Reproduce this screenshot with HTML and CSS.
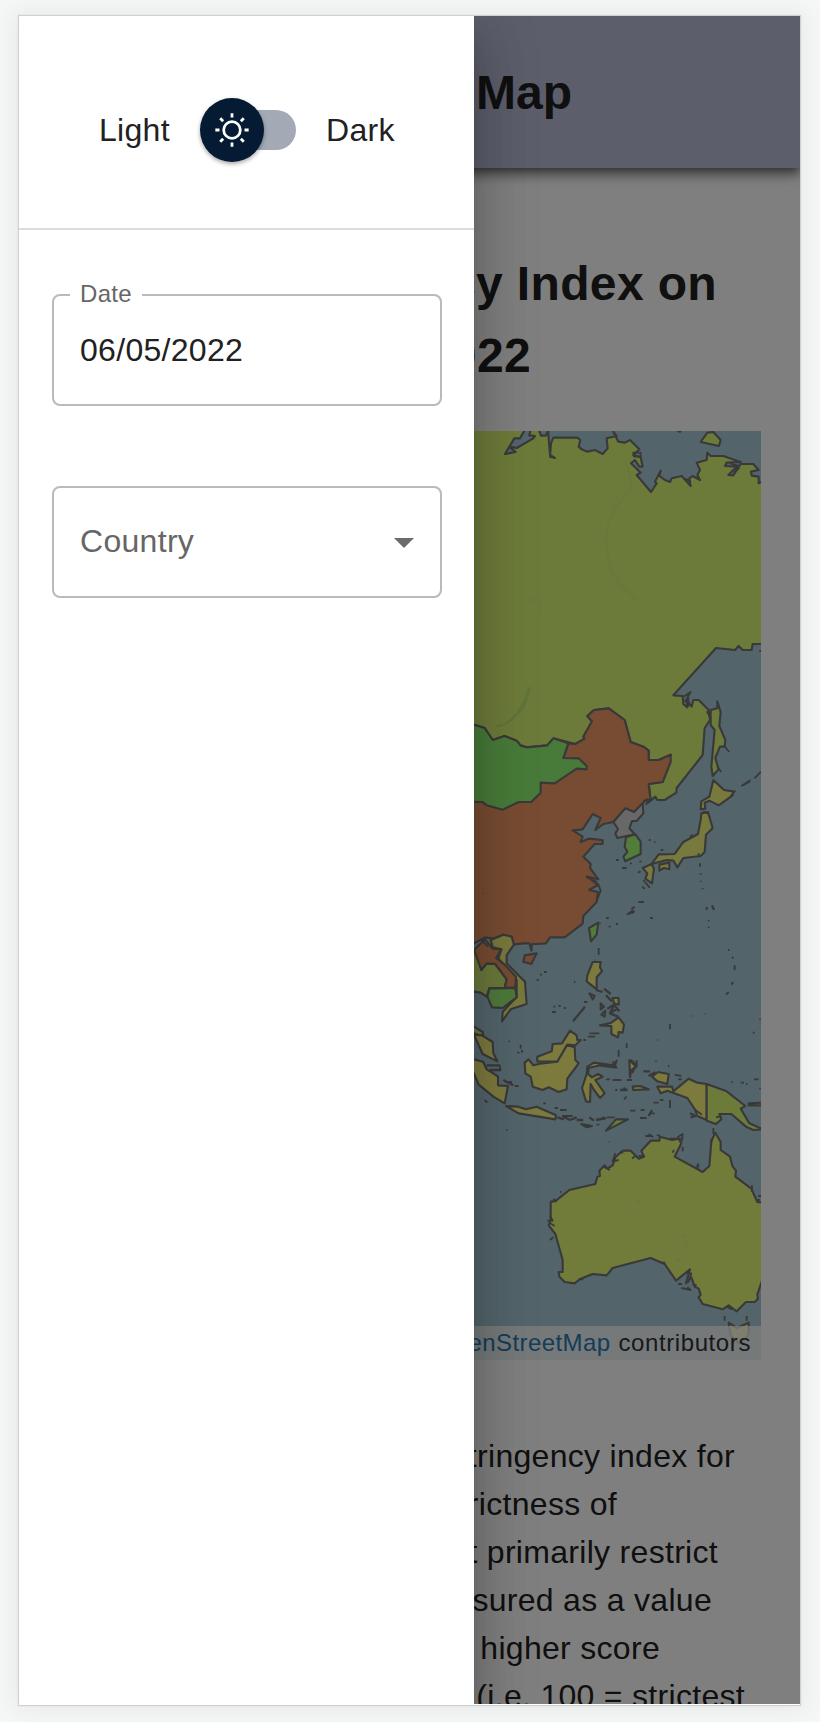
FILE: index.html
```html
<!DOCTYPE html>
<html lang="en">
<head>
<meta charset="utf-8">
<title>Stringency Map</title>
<link rel="stylesheet" href="styles.css">
</head>
<body>
<div class="device">
  <div class="page">
    <header class="appbar"><h1 class="appbar-title">Map</h1></header>
    <h2 class="heading"><span class="h-one">Stringency Index on</span><span class="h-two">2022</span></h2>
    <div class="map">
      <svg class="map-svg" viewBox="464 431 297 929" width="297" height="929">
        <g transform="translate(470 420) scale(.33333)" class="land">
          <path class="russia" d="M-30 20H170L150 55 133 55 105 102 137 96 118 80 140 84 190 55 195 48 178 46 182 30H207L213 47 228 47 234 30 240 105 255 114 240 110 243 70 250 53 322 53 331 60 326 80 335 88 352 95 375 90 398 102 413 85 410 55 440 48 430 35 445 65 465 68 480 60 508 88 490 105 512 112 518 140 508 140 495 120 483 130 512 158 500 165 543 216 560 190 555 185 572 152 568 168 585 180 600 186 605 175 635 168 662 198 658 175 668 168 690 180 682 165 690 150 680 128 710 120 712 98 722 108 760 108 812 126 770 128 765 138 800 140 775 165 790 166 812 132 850 132 866 150 843 155 845 167 866 170 866 190 885 180V672H848L845 690 818 690 806 678 795 690 738 684 610 826 638 828 640 852 652 862 650 840 665 860 670 840 686 840 716 870 720 900 704 924 698 1005 620 1104 619 1118 584 1140 562 1140 556 1130 542 1142 536 1092 578 1086 602 1004 566 1020 536 1020 536 992 520 980 482 966 464 900 416 865 372 870 352 888 366 904 340 950 344 956 316 972 250 955 232 976 170 982 150 975 140 962 104 948 68 960 44 924-30 900Z"/>
          <path class="russia" d="M692 66 712 38 730 36 752 60 747 78Z"/>
          <path class="dots" d="M490 98h22v12h-20zM780 130l26 8-14 20 16-14M645 176l16 8M622 33l8 3 4-5M868 693h8"/>
          <path class="river" d="M460 120Q490 170 480 215L450 245Q400 310 410 380 415 450 450 492L500 540M175 535 210 550 205 575"/>
        </g>
        <g transform="translate(470 640) scale(.33333)" class="land">
          <path class="lake" d="M172 140L182 142Q174 204 138 230 112 258 78 262L80 254 100 252Q165 205 172 140Z"/>
          <path class="china" d="M-30 430 0 300 280 354 295 310 316 312 344 296 340 290 366 244 352 228 372 210 416 205 464 240 482 306 520 320 536 332 536 360 566 360 602 344 602 366 578 426 536 432 542 482 530 478 518 490 492 516 466 505 430 546 400 552 376 570 392 534 368 522 338 568 308 571 338 590 332 606 356 596 398 600 398 612 374 612 340 650 362 672 360 684 385 718 350 710 384 734 358 750 384 756 380 786 340 828 338 851 284 892 240 892 228 910 200 912 186 912 184 932 178 910 160 910 130 914 125 890 100 884 70 896 45 892 12 910-30 910Z"/>
          <path class="mongolia" d="M-30 242 12 254 44 264 68 300 104 288 140 302 152 317 170 322 232 316 250 295 295 310 280 354 326 355 350 378 350 388 320 386 254 430 212 428 212 458 184 486 146 486 98 509 50 496 38 486-30 484Z"/>
          <path class="nkorea" d="M430 546 466 505 492 516 518 490 520 520 500 543 486 543 478 565 494 583 442 594 436 580 444 567Z"/>
          <path class="skorea" d="M468 592 496 583 512 605 512 642 466 664 460 650 472 636 464 620Z"/>
          <path class="japan" d="M518 684 545 672 566 643 614 642 640 606 684 582 692 540 694 520 714 516 728 564 708 584 704 636 692 648 640 654 622 682 610 662 590 660 545 672 552 686 546 730 526 716 532 700ZM568 674 598 668 598 688 582 684 568 692ZM730 420 762 450 790 454 788 466 746 496 718 482 704 488 706 506 692 508 694 484 718 470Z"/>
          <path class="russia" d="M742 184 752 216 748 258 766 300 764 320 750 320 736 354 746 388 728 408 724 380 734 270 722 255 722 210 742 205Z"/>
          <path class="dots" d="M764 320l14 16M742 380l12 16M873 395l-20 20M842 420l-28 18M840 424l-22 12M796 452l-14 16M640 170l22-14-18 30M655 160v40M710 214l12 20M700 514l16 8M520 482l18 4-12 8M348 710l34 16M356 750l28-14M384 730l8 22-10 26M660 590l8-6M536 600h6M552 606h4M572 630h8M438 660h8M456 684h14M480 670h6M508 665h6M512 694l-8 4M520 720l20 24M516 740l8 6M686 640v12M690 670v10M692 700v4M692 722v4M698 744v4M506 786h16M494 800l-10 8M476 822l12-4M540 834h8M710 800v6M726 796l6 12M408 834h8"/>
        </g>
        <g transform="translate(470 880) scale(.33333)" class="land">
          <path class="china" d="M164 226 200 220 184 252 160 245Z"/>
          <path class="skorea" d="M357 144 385 128 380 164 363 184Z"/>
          <path class="vietnam" d="M62 180 100 164 125 170 132 194 110 225 110 250 165 305 170 372 122 388 96 424 98 396 140 350 140 300 85 235 94 208 68 202Z"/>
          <path class="thai" d="M-30 200 20 210 34 270 50 250 76 252 110 298 104 324 58 325 50 350 32 338 12 335-30 338Z"/>
          <path class="china" d="M12 210 45 178 68 206 94 208 78 234 104 254 138 290 136 322 104 324 110 298 76 252 50 250 34 270Z"/>
          <path class="skorea cambodia" d="M52 350 58 325 136 324 140 352 98 384 66 382Z"/>
          <path class="thai" d="M-20 420 12 440 38 456 40 470 12 460Z"/>
          <path class="indo" d="M12 464 36 466 68 486 70 520 82 544 38 522ZM-30 520 12 538 40 546 50 568 70 580 84 590 84 616 114 618 104 670 70 650 26 614 12 580-30 550ZM108 678 144 680 168 688 200 680 258 706 256 718 146 700ZM202 530 245 514 248 492 276 490 300 452 320 466 322 480 332 480 316 496 292 494 262 545 202 544ZM164 548 176 538 190 556 216 550 262 545 290 496 314 502 316 540 326 550 292 596 290 628 266 636 236 622 218 630 188 620 182 590 166 580ZM352 560 372 548 430 556 440 542 432 562 390 556 356 564 354 582 366 592 384 582 398 590 376 600 404 640 390 654 372 630 362 612 360 666 348 664 336 624 350 582ZM478 540 488 550 500 560 484 570 480 592ZM488 620 510 618 536 628 490 630ZM546 590 564 576 596 582 592 612 562 604ZM562 620 606 620 610 634 656 596 682 608 710 612V720L682 708 676 690 652 654 592 632 572 640ZM334 732 366 738 350 742Z"/>
          <path class="russia" d="M710 612 770 634 826 678 812 686 838 730 880 748 850 750 828 740 784 702 748 702 754 718 738 732 710 722ZM836 670 880 668V676H836ZM408 752 438 718 474 718Z"/>
          <path class="indo" d="M368 246 392 246 390 262 396 274 380 292 380 328 350 304 352 286ZM390 436 424 428 446 412 462 434 458 458 446 456 444 472 424 462 424 438ZM428 354 446 354 446 374 432 370ZM358 340 374 348 368 358ZM392 370 402 380 392 388ZM394 404 406 392 404 410Z"/>
          <path class="dots heavy" d="M345 380l-36 44M378 330l20 6M402 326l20 16M408 346l18 18M412 386l20-12-12 26 24-16M420 400l24 10M430 372l18 22M50 556h40M60 570h34M100 600l30 16M262 712l20 6M280 710l20 10M300 720l20-8M320 720l20 0M358 712l14 10M378 720l30-6M428 545l12 20M482 540l16 14-12 26M520 574h20M536 588l20-12M450 630l20 0-10-6M546 690l-10 18M660 700l16 8-14 4"/>
          <path class="dots" d="M352 366h-10M386 204v20M374 240h2M388 130h4M416 140h6M438 132h6M470 104l20-14M486 100l8-6M506 66h16M540 114h8M710 84v6M726 78l6 12M716 120v4M716 140v4M774 210h4M788 230v6M794 256v14M790 306l-6 8M776 336l-8 8M210 284h6M222 276h8M200 300h6M312 306h4M250 380h6M266 378h6M282 384h6M246 396h12M152 494v12M156 510v8M116 484h4M142 518h6M40 40h2M34 180l20 20M90 556v16M134 618h12M106 606h20M44 660l8 8M110 750h2M410 712h24M254 684h10M220 670h8M270 690h20M276 708h32M388 460h-30M376 470h-22M348 480h-8M470 490v14M446 510v20M500 540v18M408 598h12M428 600h26M470 600h16M436 630h6M570 660h10M550 668h16M600 660v24M540 700l14 0M480 692h16M512 690l12 0M510 714h20M470 650l-8 8M614 584l20 4M624 598h12M594 558h4M556 544h4M562 480h2M600 432v16M662 408h2M704 402h2M848 458h6M868 418h4M784 606h4M812 608h10M828 612h4M852 598h14M868 626h4M676 690l20 14M738 712l16-4M380 734h8M398 710l4 10"/>
        </g>
        <g transform="translate(470 1100) scale(.33333)" class="land">
          <path class="aus" d="M880 308 862 306 844 266 796 230 798 212 788 200 780 170 752 150 752 126 736 98 724 124 718 198 698 216 614 170 634 130 626 116 606 120 570 110 568 122 542 122 514 152 522 170 506 176 482 152 458 152 436 172 428 196 412 206 404 196 388 212 390 228 382 230 376 252 298 270 258 302 242 306V360L236 376 256 402 278 480V516L266 516 268 530 284 546 314 550 332 536 368 522 410 526 428 504 542 474 584 492 618 542 660 508 648 550 664 532 674 560 686 566 692 584 686 592 698 612 758 628 776 616 800 634 828 606 854 606 864 596 862 584 880 530Z"/>
          <path class="tas" d="M776 668 800 684 836 668 836 702 826 718 806 730 782 706Z"/>
          <path class="dots" d="M526 108h20M536 102l14 10M560 106h10M600 116h34M622 112l16-10-2 22M638 140v14M612 150l-4 8M436 160l-8 24 18-4M448 158l12 0M400 200l20 10M486 176l12 -10M506 168l18 0M240 346l8 16-16 0M238 368l16 10M240 420l10-8M242 304l16 0-8-8M270 276h4M416 126h2M110 90h2M678 200l10-6M684 190v16M730 84v18M724 116v12M846 256v20M864 288h10M862 300h8M624 552h12M634 564l28 6-10-8M650 520l14 0-10 28M668 552l12 4M770 620l16 8M764 648v14M830 648v14M326 538h14M574 488l12 0"/>
          <path class="river" d="M498 304h10M340 436h8M620 236h6M640 410h10M650 430v10M652 460v6M690 458h6M620 482h10"/>
        </g>
      </svg>
      <div class="attribution"><a class="osm">OpenStreetMap</a> contributors</div>
    </div>
    <div class="copy">
      <p class="l1">stringency index for</p>
      <p class="l2">strictness of</p>
      <p class="l3">that primarily restrict</p>
      <p class="l4">measured as a value</p>
      <p class="l5">higher score</p>
      <p class="l6">(i.e. 100 = strictest</p>
    </div>
  </div>
  <div class="backdrop"></div>
  <aside class="drawer">
    <div class="mode">
      <span>Light</span>
      <div class="switch">
        <div class="thumb"><svg width="40" height="40" viewBox="0 0 20 20" fill="#fff"><path d="M9.305 1.667V3.75h1.389V1.667h-1.39zm-4.707 1.95l-.982.982L5.09 6.072l.982-.982-1.473-1.473zm10.802 0L13.927 5.09l.982.982 1.473-1.473-.982-.982zM10 5.139a4.872 4.872 0 00-4.862 4.86A4.872 4.872 0 0010 14.862 4.872 4.872 0 0014.86 10 4.872 4.872 0 0010 5.139zm0 1.389A3.462 3.462 0 0113.471 10a3.462 3.462 0 01-3.473 3.472A3.462 3.462 0 016.527 10 3.462 3.462 0 0110 6.528zM1.665 9.305v1.39h2.083v-1.39H1.666zm14.583 0v1.39h2.084v-1.39h-2.084zM5.09 13.928L3.616 15.4l.982.982 1.473-1.473-.982-.982zm9.82 0l-.982.982 1.473 1.473.982-.982-1.473-1.473zM9.305 16.25v2.083h1.389V16.25h-1.39z"/></svg></div>
      </div>
      <span>Dark</span>
    </div>
    <div class="fields">
      <div class="field"><span class="label">Date</span><span class="value">06/05/2022</span></div>
      <div class="field"><span class="placeholder">Country</span><svg class="arrow" width="20" height="10" viewBox="0 0 20 10"><path d="M0 0h20L10 10z" fill="#6b6b6b"/></svg></div>
    </div>
  </aside>
</div>
</body>
</html>
```
FILE: styles.css
```css
* { box-sizing: border-box; }
body {
  margin: 0;
  height: 1722px;
  overflow: hidden;
  padding: 16px 20px 17px 19px;
  background: #f6f8f7;
  font-family: "Liberation Sans", Arial, sans-serif;
  font-size: 32px;
  letter-spacing: 0.3px;
  color: #212121;
}
.device {
  position: relative;
  width: 781px;
  height: 1689px;
  background: #fff;
  box-shadow: 0 0 1px 1px #cfd1d0, 0 0 24px 6px #e6eae8;
}
.page { height: 1688px; overflow: hidden; }
.appbar {
  height: 152px;
  padding: 41px 228px 0 0;
  background: #b9bcd6;
  text-align: right;
  box-shadow: 0 4px 8px -2px rgba(0,0,0,.4), 0 8px 10px rgba(0,0,0,.28), 0 2px 20px rgba(0,0,0,.2);
}
.appbar-title, .heading {
  margin: 0;
  font-size: 48px;
  font-weight: 700;
  line-height: 72px;
  letter-spacing: 0;
  white-space: nowrap;
}
.heading { padding-top: 80px; text-align: right; letter-spacing: 0.35px; }
.heading span { display: block; }
.h-one { padding-right: 83px; }
.h-two { padding-right: 269px; }
.map {
  position: relative;
  width: 297px;
  height: 929px;
  margin: 39px 0 0 445px;
  background: #a6cad6;
  overflow: hidden;
}
.map-svg { display: block; }
.land path { stroke: #727272; stroke-width: 6.4; stroke-linejoin: round; }
.land .russia { fill: #daf774; }
.land .china { fill: #f09864; }
.land .mongolia { fill: #90f672; }
.land .nkorea { fill: #d0d0d0; }
.land .skorea { fill: #a2f874; }
.land .cambodia { fill: #9cf476; }
.land .japan, .land .vietnam { fill: #f0f47a; }
.land .thai { fill: #d6f278; }
.land .indo { fill: #fbf47c; }
.land .aus { fill: #e2f876; }
.land .tas { fill: #f3f876; }
.land .dots { fill: none; stroke-width: 5.5; }
.land .heavy { stroke-width: 7; }
.land .river { fill: none; stroke: #d2f075; stroke-width: 6; }
.land .lake { fill: #c0e878; stroke: none; }
.attribution {
  position: absolute;
  right: 0;
  bottom: 0;
  width: 297px;
  height: 34px;
  padding-right: 10px;
  display: flex;
  justify-content: flex-end;
  gap: 8px;
  font-size: 24px;
  line-height: 34px;
  letter-spacing: 0.6px;
  white-space: nowrap;
  color: #333;
  background: rgba(255,255,255,.76);
}
.osm { color: #2a7ab0; letter-spacing: 0.4px; }
.copy { padding-top: 72px; line-height: 48px; white-space: nowrap; text-align: right; }
.copy p { margin: 0; }
.copy .l1 { padding-right: 65px; }
.copy .l2 { padding-right: 183px; }
.copy .l3 { padding-right: 82px; }
.copy .l4 { padding-right: 88px; }
.copy .l5 { padding-right: 140px; }
.copy .l6 { padding-right: 55px; }
.backdrop { position: absolute; inset: 0 0 1px 0; background: rgba(0,0,0,.5); }
.drawer {
  position: absolute;
  inset: 0 auto 0 0;
  width: 455px;
  background: #fff;
  clip-path: inset(0 -100px 1px 0);
  box-shadow: 0 16px 20px -10px rgba(0,0,0,.2), 0 32px 48px 4px rgba(0,0,0,.14), 0 12px 60px 10px rgba(0,0,0,.12);
}
.mode {
  height: 214px;
  padding: 15px 0 0 80px;
  display: flex;
  align-items: center;
  border-bottom: 2px solid #dcdcdc;
}
.switch {
  width: 85px;
  height: 40px;
  margin: 0 30px 0 42px;
  background: #a3aab5;
  border-radius: 20px;
}
.mode span { width: 70px; padding-top: 2px; white-space: nowrap; }
.thumb {
  width: 64px;
  height: 64px;
  margin: -12px 0 0 -11px;
  border-radius: 50%;
  display: grid;
  place-items: center;
  background: #051a33;
  box-shadow: 0 2px 4px rgba(0,0,0,.35);
}
.fields { padding: 64px 32px 0 33px; display: grid; gap: 80px; }
.field {
  position: relative;
  height: 112px;
  padding: 0 26px 2px;
  display: flex;
  align-items: center;
  justify-content: space-between;
  border: 2px solid #bababa;
  border-radius: 8px;
}
.label {
  position: absolute;
  top: -18px;
  left: 16px;
  width: 72px;
  padding-left: 10px;
  font-size: 24px;
  line-height: 32px;
  color: #666;
  background: #fff;
}
.value { padding-top: 2px; }
.placeholder { color: #666; }
.arrow { margin-top: 4px; }
```
